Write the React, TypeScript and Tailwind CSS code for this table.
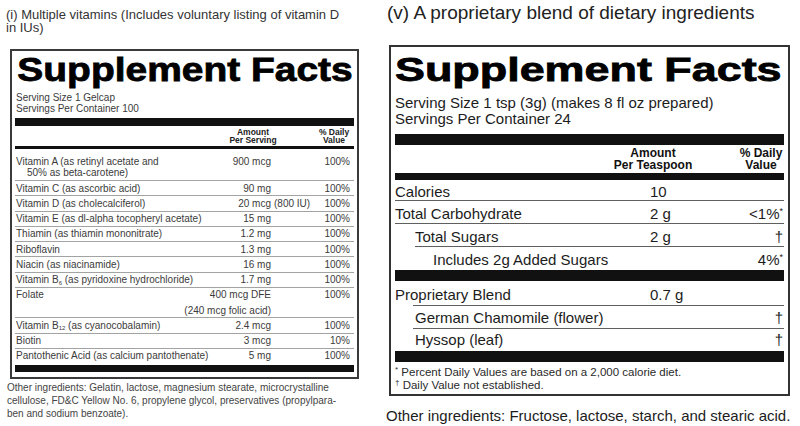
import type { ReactNode } from "react";
import clsx from "clsx";

// Left label: multiple vitamins
function LRow({
  name,
  amount,
  dv,
  extra,
  last = false,
}: {
  name: ReactNode;
  amount?: ReactNode;
  dv?: string;
  extra?: string;
  last?: boolean;
}) {
  return (
    <div
      className={clsx(
        "flex items-start py-[1.5px] leading-[11.27px]",
        !last && "border-b border-[#a3a3a3]"
      )}
    >
      <div className="flex-1 pl-[1px] whitespace-nowrap">{name}</div>
      <div className="w-[60px] flex justify-end whitespace-nowrap">{amount}</div>
      <div className="w-[83px] pr-[4px] flex justify-between whitespace-nowrap">
        <span className="pl-[3px]">{extra}</span>
        <span>{dv}</span>
      </div>
    </div>
  );
}

// Right label: amount + daily value columns
function RCols({ amount, dv }: { amount?: ReactNode; dv?: ReactNode }) {
  return (
    <>
      <div className="w-[74px] whitespace-nowrap">{amount}</div>
      <div className="w-[60px] pr-[1px] text-right whitespace-nowrap">{dv}</div>
    </>
  );
}

function MultiVitaminLabel() {
  return (
    <div className="w-[380px] shrink-0 pl-[6px]">
      <p className="mt-[8px] text-[13px] leading-[13px] text-[#333] whitespace-nowrap">
        (i) Multiple vitamins (Includes voluntary listing of vitamin D
        <br />
        in IUs)
      </p>

      <div className="mt-[15px] ml-[4px] w-[349px] border-2 border-[#3a3a3a] px-[3px] pt-[2px] pb-[5px] text-[10px] text-[#3b3b3b]">
        <div className="pl-[2px] text-[33px] leading-[33px] font-bold text-black whitespace-nowrap origin-left scale-x-[1.18] [-webkit-text-stroke:0.8px_black]">
          Supplement Facts
        </div>
        <div className="mt-[6px] pl-[1px] leading-[11px] whitespace-nowrap">
          Serving Size 1 Gelcap
          <br />
          Servings Per Container 100
        </div>
        <div className="mt-[4px] h-[8px] bg-[#111]" />
        <div className="mt-[1.5px] flex justify-end pr-[3px] text-[8.5px] leading-[8.5px] font-bold text-[#222] whitespace-nowrap">
          <div className="w-[50px] text-center">
            Amount
            <br />
            Per Serving
          </div>
          <div className="ml-[39px] w-[34px] text-center">
            % Daily
            <br />
            Value
          </div>
        </div>
        <div className="mt-[1.5px] h-[3px] bg-[#111]" />

        <div className="flex items-start pt-[7px] pb-[1.5px] leading-[11.27px] border-b border-[#a3a3a3]">
          <div className="flex-1 pl-[1px] whitespace-nowrap">
            Vitamin A (as retinyl acetate and
            <br />
            <span className="pl-[11px]">50% as beta-carotene)</span>
          </div>
          <div className="w-[60px] flex justify-end whitespace-nowrap">900 mcg</div>
          <div className="w-[83px] pr-[4px] text-right">100%</div>
        </div>
        <LRow name="Vitamin C (as ascorbic acid)" amount="90 mg" dv="100%" />
        <LRow name="Vitamin D (as cholecalciferol)" amount="20 mcg" extra="(800 IU)" dv="100%" />
        <LRow name="Vitamin E (as dl-alpha tocopheryl acetate)" amount="15 mg" dv="100%" />
        <LRow name="Thiamin (as thiamin mononitrate)" amount="1.2 mg" dv="100%" />
        <LRow name="Riboflavin" amount="1.3 mg" dv="100%" />
        <LRow name="Niacin (as niacinamide)" amount="16 mg" dv="100%" />
        <LRow
          name={
            <>
              Vitamin B<sub className="text-[6px]">6</sub> (as pyridoxine hydrochloride)
            </>
          }
          amount="1.7 mg"
          dv="100%"
        />
        <div className="py-[1.5px] border-b border-[#a3a3a3]">
          <div className="flex items-start leading-[11.27px]">
            <div className="flex-1 pl-[1px]">Folate</div>
            <div className="w-[60px] flex justify-end whitespace-nowrap">400 mcg DFE</div>
            <div className="w-[83px] pr-[4px] text-right">100%</div>
          </div>
          <div className="mt-[4px] flex items-start leading-[11.27px]">
            <div className="flex-1" />
            <div className="w-[60px] flex justify-end whitespace-nowrap">(240 mcg folic acid)</div>
            <div className="w-[83px]" />
          </div>
        </div>
        <LRow
          name={
            <>
              Vitamin B<sub className="text-[6px]">12</sub> (as cyanocobalamin)
            </>
          }
          amount="2.4 mcg"
          dv="100%"
        />
        <LRow name="Biotin" amount="3 mcg" dv="10%" />
        <LRow name="Pantothenic Acid (as calcium pantothenate)" amount="5 mg" dv="100%" last />
        <div className="mt-[1.5px] h-[7px] bg-[#111]" />
      </div>

      <p className="mt-[2.5px] ml-[1px] text-[10px] leading-[13px] text-[#444] whitespace-nowrap">
        Other ingredients: Gelatin, lactose, magnesium stearate, microcrystalline
        <br />
        cellulose, FD&amp;C Yellow No. 6, propylene glycol, preservatives (propylpara-
        <br />
        ben and sodium benzoate).
      </p>
    </div>
  );
}

function BlendLabel() {
  return (
    <div className="flex-1 pl-[7px]">
      <p className="mt-[2.5px] text-[19px] leading-[19px] text-[#222] whitespace-nowrap">
        (v) A proprietary blend of dietary ingredients
      </p>

      <div className="mt-[23.5px] ml-[2px] w-[401px] border-2 border-[#333] px-[4px] pt-[5.5px] pb-[2px] text-[15px] leading-[16px] text-[#1c1c1c]">
        <div className="text-[33px] leading-[33px] font-bold text-black whitespace-nowrap origin-left scale-x-[1.36] [-webkit-text-stroke:0.8px_black]">
          Supplement Facts
        </div>
        <div className="mt-[9.5px] whitespace-nowrap">
          Serving Size 1 tsp (3g) (makes 8 fl oz prepared)
          <br />
          Servings Per Container 24
        </div>
        <div className="mt-[7px] h-[11px] bg-[#111]" />
        <div className="mt-[2px] flex justify-end text-[12px] leading-[12px] font-bold text-[#111] whitespace-nowrap">
          <div className="w-[84px] text-center">
            Amount
            <br />
            Per Teaspoon
          </div>
          <div className="ml-[43px] w-[46px] text-center">
            % Daily
            <br />
            Value
          </div>
        </div>
        <div className="mt-[2px] h-[7px] bg-[#111]" />

        <div className="flex pt-[3.5px] pb-[0.5px]">
          <div className="flex-1">Calories</div>
          <RCols amount="10" />
        </div>
        <div className="flex border-t border-[#5f5f5f] pt-[4.5px] pb-[1.5px]">
          <div className="flex-1">Total Carbohydrate</div>
          <RCols
            amount="2 g"
            dv={
              <>
                &lt;1%<sup className="text-[9px]">*</sup>
              </>
            }
          />
        </div>
        <div className="flex border-t border-[#5f5f5f] pt-[4.5px] pb-[1.5px]">
          <div className="flex-1 pl-[20px]">Total Sugars</div>
          <RCols amount="2 g" dv="†" />
        </div>
        <div className="ml-[20px] flex border-t border-[#5f5f5f] pt-[4.5px] pb-[2.5px]">
          <div className="flex-1 pl-[18px] whitespace-nowrap">Includes 2g Added Sugars</div>
          <RCols
            dv={
              <>
                4%<sup className="text-[9px]">*</sup>
              </>
            }
          />
        </div>
        <div className="h-[11px] bg-[#111]" />

        <div className="flex pt-[6px] pb-[1.5px]">
          <div className="flex-1">Proprietary Blend</div>
          <RCols amount="0.7 g" />
        </div>
        <div className="ml-[18px] flex border-t border-[#5f5f5f] pt-[4px] pb-[2px]">
          <div className="flex-1 pl-[2px] whitespace-nowrap">German Chamomile (flower)</div>
          <RCols dv="†" />
        </div>
        <div className="ml-[18px] flex border-t border-[#5f5f5f] pt-[3.5px] pb-[3px]">
          <div className="flex-1 pl-[2px]">Hyssop (leaf)</div>
          <RCols dv="†" />
        </div>
        <div className="h-[11px] bg-[#111]" />

        <div className="mt-[4px] text-[11.5px] leading-[13px] text-[#2a2a2a] whitespace-nowrap">
          <div>
            <sup className="text-[8px]">*</sup> Percent Daily Values are based on a 2,000 calorie diet.
          </div>
          <div>
            <sup className="text-[8px]">†</sup> Daily Value not established.
          </div>
        </div>
      </div>

      <p className="mt-[12px] -ml-[1px] text-[15px] leading-[16px] text-[#1c1c1c] whitespace-nowrap">
        Other ingredients: Fructose, lactose, starch, and stearic acid.
      </p>
    </div>
  );
}

export default function App() {
  return (
    <div className="w-[800px] h-[426px] overflow-hidden bg-white flex font-['Liberation_Sans',Arial,Helvetica,sans-serif]">
      <MultiVitaminLabel />
      <BlendLabel />
    </div>
  );
}
